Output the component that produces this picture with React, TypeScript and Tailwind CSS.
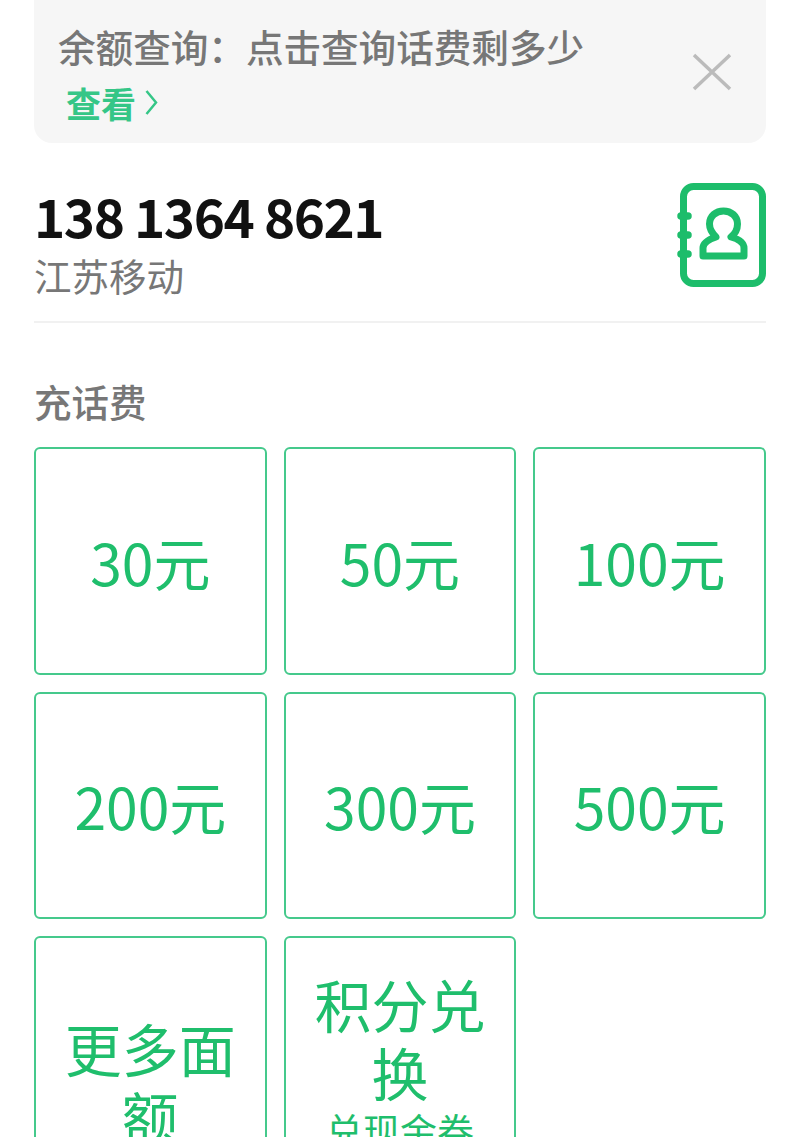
const font = '"Noto Sans CJK SC", "Noto Sans", sans-serif';

function Amount({ label }: { label: string }) {
  return (
    <div className="flex h-[227.5px] items-center justify-center rounded-[6px] border-2 border-[#45c98c] text-[57px] leading-[68px] text-[#1fbe6c]">
      {label}
    </div>
  );
}

function ContactIcon() {
  return (
    <svg width="120" height="130" viewBox="0 0 120 130" fill="none" className="-mt-[16px] -mr-[14px] -mb-[10px] -ml-[20px] shrink-0">
      <rect x="23.5" y="16.5" width="79" height="97" rx="10" stroke="#1dbd6b" strokeWidth="7" />
      <path d="M21 46h7M21 65h7M21 84h7" stroke="#1dbd6b" strokeWidth="7.5" strokeLinecap="round" />
      <path
        d="M43 86V78C43 72 50 69 56 67C51 62 49.5 57 49.5 54C49.5 46 56 41 63.5 41C71 41 77.5 46 77.5 54C77.5 58 76 63 71 67C78 69 84 72 84 78V86Z"
        stroke="#1dbd6b"
        strokeWidth="7"
        strokeLinejoin="round"
      />
    </svg>
  );
}

export default function App() {
  return (
    <div className="h-[1137px] w-[800px] overflow-hidden bg-white px-[34px]" style={{ fontFamily: font }}>
      <div className="flex h-[143px] items-center justify-between rounded-b-[18px] bg-[#f6f6f6] pr-[34px] pl-[24px]">
        <div>
          <div className="text-[37.6px] leading-[50px] font-medium whitespace-nowrap text-[#777777]">{"余额查询\uFF1A点击查询话费剩多少"}</div>
          <div className="mt-[9px] -mb-[3px] ml-[8px] flex items-center gap-[9px] text-[35px] leading-[46px] font-bold text-[#35c687]">
            查看
            <svg width="13" height="27" viewBox="0 0 13 27" fill="none">
              <path d="M1.5 2L11 13.5L1.5 25" stroke="#35c687" strokeWidth="2.5" />
            </svg>
          </div>
        </div>
        <svg width="40" height="38" viewBox="0 0 40 38" fill="none" className="shrink-0">
          <path d="M2 2L38 36M38 2L2 36" stroke="#bbbbbb" strokeWidth="3.5" />
        </svg>
      </div>

      <div className="flex h-[180px] items-center justify-between border-b-2 border-[#f1f1f1] pt-[12px]">
        <div className="pt-[8px]">
          <div className="text-[53px] leading-[62px] font-bold tracking-[-1.45px] whitespace-nowrap text-[#111111]">138 1364 8621</div>
          <div className="mt-[4px] text-[37.5px] leading-[50px] text-[#777777]">江苏移动</div>
        </div>
        <ContactIcon />
      </div>

      <div className="mt-[53px] text-[37.5px] leading-[50px] font-medium text-[#777777]">充话费</div>

      <div className="mt-[21px] grid grid-cols-3 gap-[17px]">
        <Amount label="30元" />
        <Amount label="50元" />
        <Amount label="100元" />
        <Amount label="200元" />
        <Amount label="300元" />
        <Amount label="500元" />
        <div className="flex h-[300px] flex-col items-center rounded-[6px] border-2 border-[#45c98c] px-[24px] pt-[75px] text-center text-[57px] leading-[68px] text-[#1fbe6c]">
          更多面额
        </div>
        <div className="flex h-[300px] flex-col items-center rounded-[6px] border-2 border-[#45c98c] px-[24px] pt-[31px] text-center text-[57px] leading-[68px] text-[#1fbe6c]">
          积分兑换
          <div className="text-[37px] leading-[50px]">兑现金券</div>
        </div>
      </div>
    </div>
  );
}
